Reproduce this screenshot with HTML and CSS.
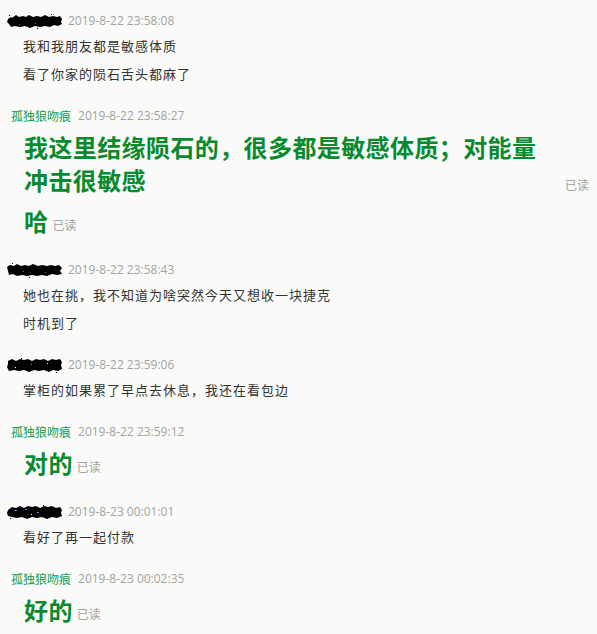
FILE: index.html
```html
<!DOCTYPE html>
<html>
<head>
    <link rel="stylesheet" href="styles.css">
</head>
<body>
    <div class="chat">
        <div class="msg">
            <div class="msg-head">
                <svg class="scribble" width="56" height="15" viewBox="0 0 56 15" preserveAspectRatio="none"><path d="M1 5 L4 3 L5 4 L9 1 L12 3 L16 2 L19 3 L22 1 L26 3 L30 2 L34 3 L38 1 L42 3 L46 2 L50 3 L53 2 L55 5 L54 8 L55 10 L51 12 L47 11 L43 13 L38 12 L33 13 L28 12 L23 14 L18 12 L13 13 L8 12 L4 13 L2 10 L0 8 Z" fill="#000"/><rect x="2" y="1" width="1" height="1"/><rect x="44" y="0" width="1" height="1"/><rect x="30" y="14" width="1" height="1"/><rect x="28" y="9" width="1" height="1" fill="#4a8cf0"/><rect x="12" y="10" width="1" height="1" fill="#4a8cf0"/></svg>
                <span class="time">2019-8-22 23:58:08</span>
            </div>
            <p class="text">我和我朋友都是敏感体质</p>
            <p class="text">看了你家的陨石舌头都麻了</p>
        </div>

        <div class="msg">
            <div class="msg-head mine">
                <span class="name">孤独狼吻痕</span>
                <span class="time">2019-8-22 23:58:27</span>
            </div>
            <div class="bubble">
                <span class="big">我这里结缘陨石的，很多都是敏感体质；对能量冲击很敏感</span>
                <span class="read wide">已读</span>
            </div>
            <div class="bubble">
                <span class="big">哈</span>
                <span class="read">已读</span>
            </div>
        </div>

        <div class="msg">
            <div class="msg-head">
                <svg class="scribble" width="56" height="15" viewBox="0 0 56 15" preserveAspectRatio="none"><path d="M0 4 L3 2 L7 3 L10 1 L14 3 L18 2 L22 3 L26 1 L31 3 L35 2 L40 3 L44 2 L48 3 L52 2 L55 5 L53 8 L55 11 L50 12 L45 11 L40 13 L35 12 L30 13 L25 12 L20 13 L15 12 L10 13 L6 11 L2 12 L1 8 Z" fill="#000"/><rect x="5" y="0" width="1" height="1"/><rect x="22" y="14" width="1" height="1"/><rect x="16" y="8" width="1" height="1" fill="#4a8cf0"/><rect x="38" y="9" width="1" height="1" fill="#4a8cf0"/></svg>
                <span class="time">2019-8-22 23:58:43</span>
            </div>
            <p class="text">她也在挑，我不知道为啥突然今天又想收一块捷克</p>
            <p class="text">时机到了</p>
        </div>

        <div class="msg">
            <div class="msg-head">
                <svg class="scribble" width="56" height="15" viewBox="0 0 56 15" preserveAspectRatio="none"><path d="M1 3 L5 1 L9 3 L13 1 L17 2 L21 1 L25 3 L29 1 L33 2 L37 1 L41 3 L45 1 L49 2 L53 1 L55 4 L54 7 L55 11 L51 13 L46 12 L42 14 L37 12 L32 13 L27 12 L22 14 L17 12 L12 13 L7 12 L2 13 L0 9 L1 6 Z" fill="#000"/><rect x="14" y="0" width="1" height="1"/><rect x="49" y="14" width="1" height="1"/><rect x="24" y="6" width="1" height="1" fill="#4a8cf0"/><rect x="8" y="9" width="1" height="1" fill="#fff"/><rect x="40" y="5" width="1" height="1" fill="#fff"/></svg>
                <span class="time">2019-8-22 23:59:06</span>
            </div>
            <p class="text">掌柜的如果累了早点去休息，我还在看包边</p>
        </div>

        <div class="msg">
            <div class="msg-head mine">
                <span class="name">孤独狼吻痕</span>
                <span class="time">2019-8-22 23:59:12</span>
            </div>
            <div class="bubble">
                <span class="big">对的</span>
                <span class="read">已读</span>
            </div>
        </div>

        <div class="msg">
            <div class="msg-head">
                <svg class="scribble" width="56" height="15" viewBox="0 0 56 15" preserveAspectRatio="none"><path d="M1 5 L5 2 L9 3 L13 1 L17 3 L21 1 L25 2 L29 1 L33 3 L37 1 L41 2 L45 1 L49 3 L53 2 L55 5 L54 8 L55 11 L50 13 L45 12 L40 14 L35 12 L30 13 L25 12 L20 14 L15 12 L10 13 L5 12 L1 11 L0 8 Z" fill="#000"/><rect x="3" y="13" width="1" height="1"/><rect x="36" y="0" width="1" height="1"/><rect x="7" y="5" width="3" height="1" fill="#4a8cf0"/><rect x="18" y="4" width="2" height="1" fill="#4a8cf0"/><rect x="30" y="7" width="2" height="1" fill="#4a8cf0"/><rect x="24" y="9" width="1" height="1" fill="#fff"/></svg>
                <span class="time">2019-8-23 00:01:01</span>
            </div>
            <p class="text">看好了再一起付款</p>
        </div>

        <div class="msg">
            <div class="msg-head mine">
                <span class="name">孤独狼吻痕</span>
                <span class="time">2019-8-23 00:02:35</span>
            </div>
            <div class="bubble">
                <span class="big">好的</span>
                <span class="read">已读</span>
            </div>
        </div>
    </div>
</body>
</html>
```
FILE: styles.css
```css
body {
    margin: 0;
    background: #fafbf8;
    font-family: "Noto Sans CJK SC", "Noto Sans", sans-serif;
    color: #333;
}
.chat {
    padding: 12px 8px 0 7px;
}
.msg {
    margin-bottom: 24px;
}
.msg-head {
    display: flex;
    align-items: center;
    height: 18px;
    gap: 5px;
    margin-bottom: 7px;
}
.msg-head.mine {
    padding-left: 4px;
    gap: 7px;
    margin-bottom: 5px;
}
.scribble {
    display: block;
}
.name {
    color: #16994a;
    font-size: 12px;
    line-height: 18px;
}
.time {
    color: #a3a3a3;
    font-family: "Segoe UI", "Open Sans", "Noto Sans", sans-serif;
    font-size: 12px;
    line-height: 18px;
}
.text {
    margin: 0 0 10px 16px;
    font-size: 13px;
    line-height: 18px;
    letter-spacing: 1px;
}
.text:last-child {
    margin-bottom: 0;
}
.bubble {
    display: flex;
    align-items: flex-end;
    margin: 0 0 8px 17px;
}
.bubble:last-child {
    margin-bottom: 0;
}
.big {
    max-width: 530px;
    color: #0a8a2e;
    font-size: 24px;
    font-weight: bold;
    line-height: 33px;
    letter-spacing: 0.4px;
}
.read {
    color: #a3a3a3;
    font-size: 12px;
    line-height: 20px;
    margin-left: 4px;
    padding-bottom: 2px;
}
.read.wide {
    margin-left: auto;
    padding-bottom: 1px;
}
```
